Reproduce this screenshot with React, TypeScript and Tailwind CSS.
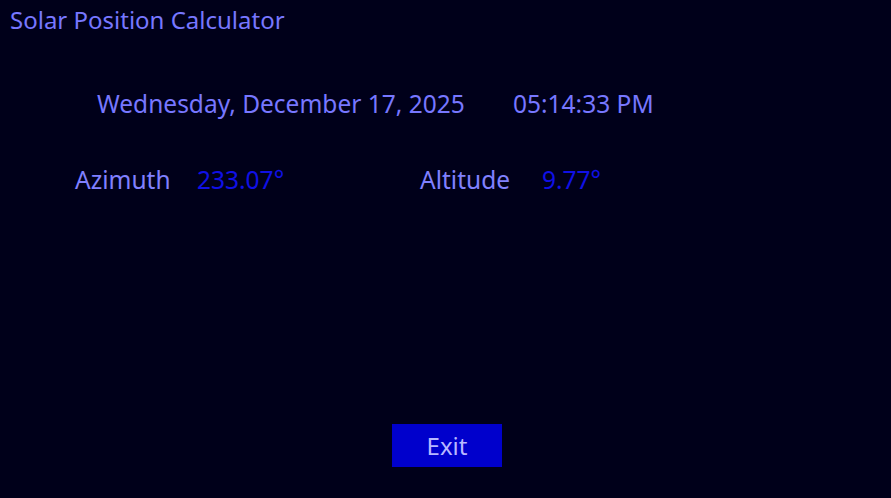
export default function App() {
  return (
    <div
      className="w-[891px] h-[498px] bg-[#00001a] flex flex-col"
      style={{ fontFamily: '"Noto Sans", "Open Sans", sans-serif' }}
    >
      <h1 className="pl-[10px] pt-[4px] text-[24px] leading-[32px] text-[#7777ff]">
        Solar Position Calculator
      </h1>

      <div className="flex pl-[97px] mt-[50px] text-[24.5px] leading-[36px] text-[#7777ff]">
        <span className="w-[416px]">Wednesday, December 17, 2025</span>
        <span>05:14:33 PM</span>
      </div>

      <div className="flex pl-[75px] mt-[40px] text-[24.5px] leading-[36px]">
        <span className="w-[122px] text-[#8080ff]">Azimuth</span>
        <span className="w-[223px] text-[#1010e6]">233.07°</span>
        <span className="w-[122px] text-[#8080ff]">Altitude</span>
        <span className="text-[#1010e6]">9.77°</span>
      </div>

      <div className="flex-1" />

      <div className="flex justify-center pb-[31px] pl-[3px]">
        <button className="w-[110px] h-[43px] bg-[#0000cc] text-[#b8b8ff] text-[24px]">
          Exit
        </button>
      </div>
    </div>
  );
}
